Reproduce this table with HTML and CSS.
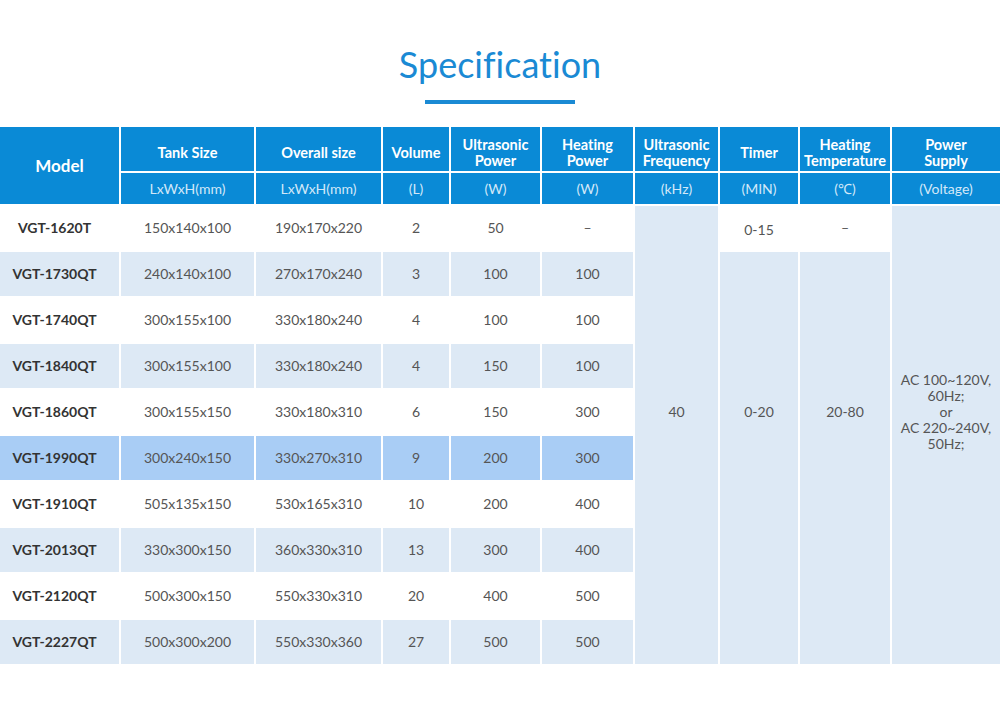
FILE: index.html
```html
<!DOCTYPE html>
<html>
<head>
<meta charset="utf-8">
<link rel="stylesheet" href="styles.css">
</head>
<body>
<header class="head">
  <h1 class="title">Specification</h1>
  <div class="rule"></div>
</header>
<table class="spec">
  <colgroup>
    <col class="c1"><col class="c2"><col class="c3"><col class="c4"><col class="c5">
    <col class="c6"><col class="c7"><col class="c8"><col class="c9"><col class="c10">
  </colgroup>
  <thead>
    <tr class="h1">
      <th rowspan="2" class="model-h">Model</th>
      <th>Tank Size</th>
      <th>Overall size</th>
      <th>Volume</th>
      <th>Ultrasonic<br>Power</th>
      <th>Heating<br>Power</th>
      <th>Ultrasonic<br>Frequency</th>
      <th>Timer</th>
      <th>Heating<br>Temperature</th>
      <th>Power<br>Supply</th>
    </tr>
    <tr class="h2">
      <th>LxWxH(mm)</th>
      <th>LxWxH(mm)</th>
      <th>(L)</th>
      <th>(W)</th>
      <th>(W)</th>
      <th>(kHz)</th>
      <th>(MIN)</th>
      <th>(℃)</th>
      <th>(Voltage)</th>
    </tr>
  </thead>
  <tbody>
    <tr class="w">
      <td class="m">VGT-1620T</td><td>150x140x100</td><td>190x170x220</td><td>2</td><td>50</td><td>–</td>
      <td rowspan="10" class="lb span10">40</td>
      <td class="t1">0-15</td><td>–</td>
      <td rowspan="10" class="lb span10 ps">AC 100~120V,<br>60Hz;<br>or<br>AC 220~240V,<br>50Hz;</td>
    </tr>
    <tr class="l">
      <td class="m">VGT-1730QT</td><td>240x140x100</td><td>270x170x240</td><td>3</td><td>100</td><td>100</td>
      <td rowspan="9" class="lb span9">0-20</td><td rowspan="9" class="lb span9">20-80</td>
    </tr>
    <tr class="w">
      <td class="m">VGT-1740QT</td><td>300x155x100</td><td>330x180x240</td><td>4</td><td>100</td><td>100</td>
    </tr>
    <tr class="l">
      <td class="m">VGT-1840QT</td><td>300x155x100</td><td>330x180x240</td><td>4</td><td>150</td><td>100</td>
    </tr>
    <tr class="w">
      <td class="m">VGT-1860QT</td><td>300x155x150</td><td>330x180x310</td><td>6</td><td>150</td><td>300</td>
    </tr>
    <tr class="hl">
      <td class="m">VGT-1990QT</td><td>300x240x150</td><td>330x270x310</td><td>9</td><td>200</td><td>300</td>
    </tr>
    <tr class="w">
      <td class="m">VGT-1910QT</td><td>505x135x150</td><td>530x165x310</td><td>10</td><td>200</td><td>400</td>
    </tr>
    <tr class="l">
      <td class="m">VGT-2013QT</td><td>330x300x150</td><td>360x330x310</td><td>13</td><td>300</td><td>400</td>
    </tr>
    <tr class="w">
      <td class="m">VGT-2120QT</td><td>500x300x150</td><td>550x330x310</td><td>20</td><td>400</td><td>500</td>
    </tr>
    <tr class="l last">
      <td class="m">VGT-2227QT</td><td>500x300x200</td><td>550x330x360</td><td>27</td><td>500</td><td>500</td>
    </tr>
  </tbody>
</table>
</body>
</html>
```
FILE: styles.css
```css
html, body {
  margin: 0;
  padding: 0;
  background: #fff;
}
body {
  font-family: Lato, "Open Sans", sans-serif;
  width: 1000px;
  font-variant-ligatures: none;
}
.head {
  display: flex;
  flex-direction: column;
  align-items: center;
  padding-top: 42px;
  height: 85px;
}
.title {
  margin: 0;
  font-family: Lato, sans-serif;
  font-weight: 400;
  font-size: 36px;
  line-height: 44px;
  color: #1a8ad4;
  font-variant-ligatures: none;
}
.rule {
  width: 150px;
  height: 4px;
  margin-top: 14px;
  background: #1a8ad4;
}
.spec {
  width: 1000px;
  table-layout: fixed;
  border-collapse: collapse;
}
.c1 { width: 120px; }
.c2 { width: 135px; }
.c3 { width: 127px; }
.c4 { width: 68px; }
.c5 { width: 91px; }
.c6 { width: 93px; }
.c7 { width: 85px; }
.c8 { width: 80px; }
.c9 { width: 92px; }
.c10 { width: 109px; }
.spec th, .spec td {
  border: 2px solid #fff;
  padding: 0;
  text-align: center;
  vertical-align: middle;
}
.spec tr > :first-child { border-left: 0; }
.spec tr > :last-child { border-right: 0; }
.spec thead tr.h1 th { border-top: 0; }
.spec th {
  background: #0a8ad6;
  color: #fff;
  font-weight: 700;
  font-size: 14.5px;
  line-height: 16px;
}
.spec .h1 { height: 45px; }
.spec .h1 th { padding-top: 7px; }
.spec .h1 th.model-h { padding-top: 0; font-size: 17px; }
.spec .h2 { height: 33px; }
.spec .h2 th {
  font-weight: 400;
  color: #d3e8f8;
  font-size: 14px;
  padding-top: 0;
}
.spec tbody tr { height: 46px; }
.spec td {
  font-size: 14px;
  color: #555;
  line-height: 16px;
}
.spec td.m {
  font-weight: 700;
  color: #333;
  padding-right: 10px;
}
.spec tr.w td { background: #fff; }
.spec tr.l td { background: #dde9f5; }
.spec tr.hl td { background: #a9cdf5; }
.spec td.lb, .spec tr td.lb { background: #dde9f5; }
.spec td.span10 { padding-bottom: 46px; }
.spec td.span9 { padding-bottom: 92px; }
.spec td.t1 { padding-top: 3px; }
.spec td.ps { line-height: 16px; }
```
